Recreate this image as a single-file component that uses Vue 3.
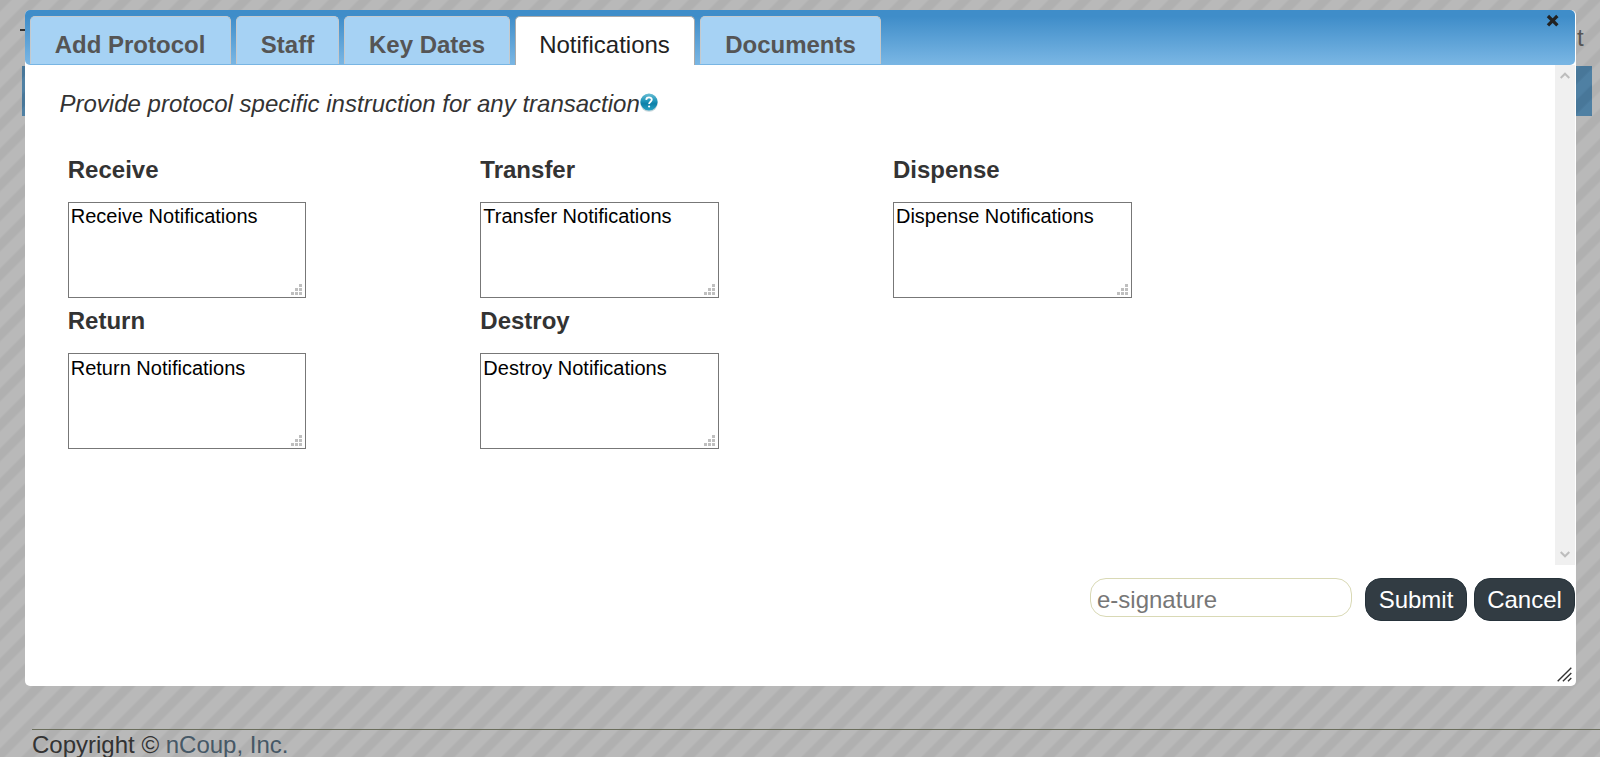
<script setup>
import { ref } from 'vue'

const tabs = ['Add Protocol', 'Staff', 'Key Dates', 'Notifications', 'Documents']
const active = ref('Notifications')
const sections = ['Receive', 'Transfer', 'Dispense', 'Return', 'Destroy']
const gripDots = [[8, 0], [4, 4], [8, 4], [0, 8], [4, 8], [8, 8]]
</script>

<template>
  <div class="page">
    <div class="behind-dash"></div>
    <div class="behind-letter">t</div>
    <div class="behind-bar"></div>

    <footer class="footer">Copyright © <a>nCoup, Inc.</a></footer>

    <section class="dialog">
      <header class="tabbar">
        <button
          v-for="tab in tabs"
          :key="tab"
          class="tab"
          :class="[{ active: tab === active }, tab.toLowerCase().replace(' ', '-')]"
          @click="active = tab"
        >{{ tab }}</button>
        <svg class="close" width="13" height="13" viewBox="0 0 13 13">
          <path d="M2.5 2.5L10.8 10.8M10.8 2.5L2.5 10.8" stroke="#222" stroke-width="3.9" stroke-linecap="square" stroke-linejoin="round" transform="translate(1 1) scale(.85)" />
        </svg>
      </header>

      <div class="body">
        <div class="content">
          <p class="intro">
            <em>Provide protocol specific instruction for any transaction</em>
            <svg class="help" width="18" height="19" viewBox="0 0 18 19">
              <defs>
                <linearGradient id="orb" x1="0" y1="0" x2="0" y2="1">
                  <stop offset="0" stop-color="#6cc0d6" />
                  <stop offset="0.45" stop-color="#1c93b8" />
                  <stop offset="0.6" stop-color="#0d7fa8" />
                  <stop offset="1" stop-color="#28a3c4" />
                </linearGradient>
              </defs>
              <ellipse cx="9" cy="9.8" rx="8.8" ry="9" fill="#c5d5da" />
              <circle cx="9" cy="9" r="8.6" fill="url(#orb)" />
              <path d="M6.2 6.9C6.3 3.5 11.9 3.6 11.8 6.8C11.7 8.8 9.2 8.7 9.1 11" fill="none" stroke="#fff" stroke-width="1.8" />
              <circle cx="9.1" cy="13.5" r="1.1" fill="#fff" />
            </svg>
          </p>
          <div class="grid">
            <div v-for="(s, i) in sections" :key="s" class="field" :class="{ second: i > 2 }">
              <label>{{ s }}</label>
              <div class="area">
                {{ s }} Notifications
                <svg class="grip" width="11" height="11" viewBox="0 0 11 11">
                  <rect v-for="(d, n) in gripDots" :key="n" :x="d[0]" :y="d[1]" width="3" height="3" fill="#bfbfbf" />
                </svg>
              </div>
            </div>
          </div>
        </div>
        <div class="scroll">
          <svg width="10" height="7" viewBox="0 0 10 7"><path d="M.7 6L5 1.7L9.3 6" /></svg>
          <svg width="10" height="7" viewBox="0 0 10 7"><path d="M.7 1L5 5.3L9.3 1" /></svg>
        </div>
      </div>

      <div class="actions">
        <input type="text" placeholder="e-signature" />
        <button class="btn submit">Submit</button>
        <button class="btn">Cancel</button>
      </div>

      <svg class="resize" width="15" height="15" viewBox="0 0 15 15">
        <path d="M.7 14.3L14.3 .7M5.9 14.3L14.3 5.9M11 14.3L14.3 11" stroke="#333" stroke-width="1.4" fill="none" />
      </svg>
    </section>
  </div>
</template>

<style>
html,
body {
  overflow: hidden;
}
</style>

<style scoped>
* {
  box-sizing: border-box;
}
.page {
  position: relative;
  width: 1600px;
  height: 757px;
  overflow: hidden;
  font: 24px/28px "Liberation Sans", Arial, sans-serif;
  color: #333;
  background: repeating-linear-gradient(135deg, #b0b0b0 0 7.07px, #b9b9b9 9.2px 19.1px, #b0b0b0 21.213px);
}
.behind-dash {
  position: absolute;
  left: 20px;
  top: 29px;
  width: 8px;
  height: 2px;
  background: #333;
}
.behind-letter {
  position: absolute;
  left: 1577px;
  top: 24px;
  color: #555;
}
.behind-bar {
  position: absolute;
  left: 22px;
  top: 66px;
  width: 1570px;
  height: 50px;
  background: repeating-linear-gradient(135deg, #487799 0 8px, #4f80a3 10px 19px, #487799 21.213px);
}
.footer {
  position: absolute;
  left: 32px;
  right: 0;
  top: 729px;
  border-top: 1px solid #6b6e5c;
  padding-top: 1px;
}
.footer a {
  color: #465866;
}
.dialog {
  position: absolute;
  left: 25px;
  top: 10px;
  width: 1551px;
  height: 676px;
  background: #fff;
  border-radius: 5px;
}
.tabbar {
  position: relative;
  display: flex;
  align-items: flex-start;
  gap: 5px;
  width: 1550px;
  height: 55px;
  padding: 6px 0 0 5px;
  border-radius: 5px;
  background: linear-gradient(#3f8dc9 0 12%, #78b5e3 96%);
}
.tab {
  height: 48px;
  padding: 9px 0 0;
  border: 1px solid #c5c9cc;
  border-bottom: 0;
  border-radius: 5px 5px 0 0;
  background: #a6d2f4;
  color: #555;
  font: bold 24px/28px "Liberation Sans", Arial, sans-serif;
  text-align: center;
}
.add-protocol { width: 201px; padding-right: 1px; }
.staff { width: 103px; }
.key-dates { width: 166px; }
.notifications { width: 180px; }
.documents { width: 181px; }
.tab.active {
  height: 49px;
  padding: 9px 1px 1px 0;
  background: #fff;
  color: #222;
  font-weight: normal;
  border-color: #aaa;
}
.close {
  position: absolute;
  left: 1521px;
  top: 4px;
}
.body {
  display: flex;
  justify-content: space-between;
  height: 500px;
  padding-right: 1px;
}
.content {
  padding: 25px 0 0 34px;
}
.intro {
  display: flex;
  margin: 0;
  height: 28px;
}
.intro em {
  padding-left: 0.5px;
}
.help {
  margin: 3px 0 0 0.5px;
}
.grid {
  display: grid;
  grid-template-columns: repeat(3, 412.6px);
  grid-auto-rows: 151px;
  margin: 38px 0 0 8.75px;
}
.field label {
  display: block;
  font-weight: bold;
}
.area {
  position: relative;
  width: 238.7px;
  height: 96px;
  margin-top: 18px;
  border: 1px solid #777;
  padding: 2px;
  color: #000;
  font-size: 20px;
  line-height: 23px;
}
.second .area {
  padding-top: 3px;
}
.grip {
  position: absolute;
  right: 3px;
  bottom: 2px;
}
.scroll {
  display: flex;
  flex-direction: column;
  align-items: center;
  justify-content: space-between;
  width: 20px;
  padding: 7px 1px 7px 0;
  background: #f0f0f0;
}
.scroll path {
  fill: none;
  stroke: #bdbdbd;
  stroke-width: 2;
}
.actions {
  display: flex;
  justify-content: flex-end;
  align-items: flex-start;
  padding: 13px 1px 0 0;
}
.actions input {
  width: 262px;
  height: 39px;
  margin-right: 13px;
  padding: 5px 6px 0;
  border: 1px solid #d9d9b5;
  border-radius: 16px;
  background: #fff;
  font: 24px/28px "Liberation Sans", Arial, sans-serif;
}
.actions input::placeholder {
  color: #777;
}
.btn {
  width: 101px;
  height: 43px;
  padding: 1px 0 0;
  border: 1px solid #26323a;
  border-radius: 16px;
  background: #323c43;
  color: #fff;
  font: 24px/28px "Liberation Sans", Arial, sans-serif;
}
.submit {
  width: 102px;
  margin-right: 7px;
}
.resize {
  position: absolute;
  right: 4px;
  bottom: 4px;
}
</style>
